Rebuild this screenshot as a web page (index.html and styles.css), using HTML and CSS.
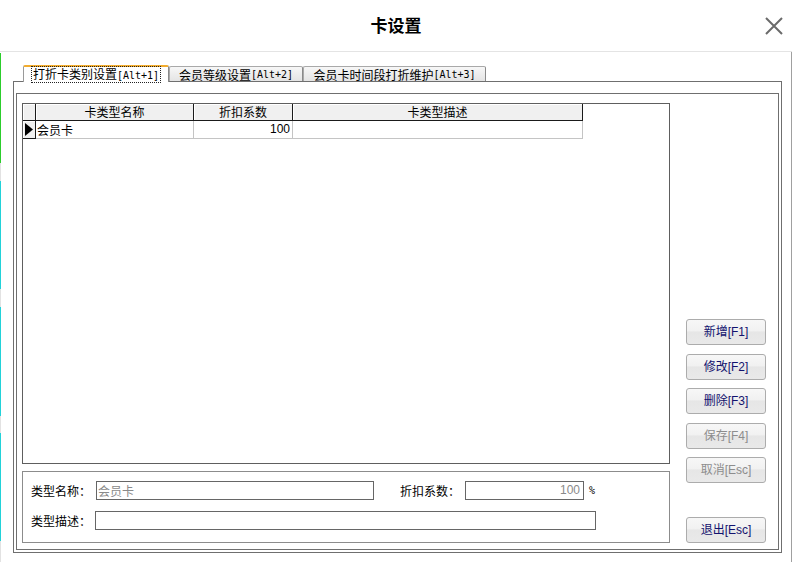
FILE: index.html
```html
<!DOCTYPE html>
<html lang="zh-CN">
<head>
<meta charset="utf-8">
<title>卡设置</title>
<link rel="stylesheet" href="styles.css">
</head>
<body>
<div class="app">
  <header class="header">
    <div></div>
    <h1 class="title">卡设置</h1>
    <div class="close-wrap">
      <svg class="close" width="18" height="18" viewBox="0 0 18 18">
        <path d="M1 1 L17 17 M17 1 L1 17" stroke="#6a6a6a" stroke-width="2" fill="none"/>
      </svg>
    </div>
  </header>
  <div class="main">
    <div class="edge">
      <div class="seg seg-white"></div>
      <div class="seg seg-green"></div>
      <div class="seg seg-gray s18"></div>
      <div class="seg seg-cyan s108"></div>
      <div class="seg seg-gray s18"></div>
      <div class="seg seg-cyan s109"></div>
      <div class="seg seg-gray s17"></div>
      <div class="seg seg-cyan s108"></div>
      <div class="seg seg-gray grow"></div>
    </div>
    <div class="body">
      <div class="tabs">
        <div class="tab tab-active w1"><span class="focus">打折卡类别设置<span class="mono">[Alt+1]</span></span></div>
        <div class="tab w2">会员等级设置<span class="mono">[Alt+2]</span></div>
        <div class="tab w3">会员卡时间段打折维护<span class="mono">[Alt+3]</span></div>
      </div>
      <div class="panel">
        <div class="inner">
          <div class="left-col">
            <div class="grid">
              <div class="grow-row head-row">
                <div class="cell rh head"></div>
                <div class="cell c1 head">卡类型名称</div>
                <div class="cell c2 head">折扣系数</div>
                <div class="cell c3 head">卡类型描述</div>
              </div>
              <div class="grow-row data-row">
                <div class="cell rh rh-data">
                  <svg width="8" height="13" viewBox="0 0 8 13"><path d="M0 0 L8 6.5 L0 13 Z" fill="#000"/></svg>
                </div>
                <div class="cell c1 data">会员卡</div>
                <div class="cell c2 data num">100</div>
                <div class="cell c3 data"></div>
              </div>
            </div>
            <div class="groupbox">
              <div class="form-row">
                <span class="label">类型名称：</span>
                <div class="input in-name">会员卡</div>
                <span class="label label2">折扣系数：</span>
                <div class="input in-rate">100</div>
                <span class="pct">%</span>
              </div>
              <div class="form-row row2">
                <span class="label">类型描述：</span>
                <div class="input in-desc"></div>
              </div>
            </div>
          </div>
          <div class="btn-col">
            <div class="btn-group">
              <button class="btn">新增[F1]</button>
              <button class="btn">修改[F2]</button>
              <button class="btn">删除[F3]</button>
              <button class="btn disabled">保存[F4]</button>
              <button class="btn disabled">取消[Esc]</button>
            </div>
            <button class="btn exit">退出[Esc]</button>
          </div>
        </div>
      </div>
    </div>
  </div>
</div>
</body>
</html>
```

FILE: styles.css
```css
* { box-sizing: border-box; }
html, body { margin: 0; padding: 0; }
body {
  width: 792px;
  height: 562px;
  overflow: hidden;
  background: #fff;
  font-family: "Liberation Sans", "Noto Sans CJK SC", sans-serif;
  font-size: 12px;
  color: #000;
}
.app {
  display: flex;
  flex-direction: column;
  height: 562px;
}
.header {
  height: 52px;
  flex: none;
  border-bottom: 1px solid #e4e4e4;
  display: grid;
  grid-template-columns: 1fr auto 1fr;
  align-items: center;
}
.title {
  margin: 0;
  font-size: 17px;
  font-weight: bold;
  font-family: "Noto Sans CJK SC", sans-serif;
  line-height: 20px;
  padding-bottom: 1px;
}
.close-wrap {
  display: flex;
  justify-content: flex-end;
  padding-right: 9px;
}
.close { display: block; }

.main {
  flex: 1;
  display: flex;
  min-height: 0;
}
.edge {
  width: 1px;
  flex: none;
  display: flex;
  flex-direction: column;
}
.seg { flex: none; }
.seg-white { height: 1px; background: #fff; }
.seg-green { height: 110px; background: #2ccd2c; }
.seg-gray { background: #e2e2e2; }
.seg-cyan { background: #22d2d9; }
.s18 { height: 18px; }
.s17 { height: 17px; }
.s108 { height: 108px; }
.s109 { height: 109px; }
.grow { flex: 1; }

.body {
  flex: 1;
  border-right: 1px solid #a0a0a0;
  padding: 13px 9px 9px 12px;
  display: flex;
  flex-direction: column;
}
.tabs {
  display: flex;
  align-items: flex-end;
  padding-left: 10px;
  height: 16px;
  flex: none;
}
.tab {
  height: 15px;
  display: flex;
  align-items: center;
  justify-content: center;
  font-family: "Noto Sans CJK SC", sans-serif;
  font-size: 12px;
  line-height: 13px;
  white-space: nowrap;
  background: linear-gradient(#f7f7f7, #e4e4e4);
  border: 1px solid #a9a9a9;
  border-bottom: none;
  border-right-color: #8a8a8a;
  border-radius: 2px 2px 0 0;
}
.tab-active {
  height: 17px;
  margin-bottom: -1px;
  position: relative;
  z-index: 1;
  background: #fff;
  border-top: 2px solid #f2ac2e;
  border-left-color: #9a9a9a;
  border-right-color: #8a8a8a;
  padding-bottom: 1px;
}
.focus {
  outline: 1px dotted #222;
  outline-offset: 0;
  padding: 0 1px;
}
.mono {
  font-family: "DejaVu Sans Mono", "Liberation Mono", monospace;
  font-size: 10px;
}
.w1 { width: 146px; }
.w2 { width: 134px; }
.w3 { width: 183px; }

.panel {
  flex: 1;
  border: 1px solid #6f6f6f;
  display: flex;
  padding: 11px 2px 2px 2px;
}
.inner {
  flex: 1;
  border: 1px solid #6f6f6f;
  display: flex;
  padding: 9px 12px 6px 5px;
  gap: 16px;
}
.left-col {
  width: 648px;
  flex: none;
  display: flex;
  flex-direction: column;
  gap: 7px;
}
.grid {
  flex: 1;
  border: 1px solid #5e5e5e;
  background: #fff;
}
.grow-row { display: flex; }
.cell {
  flex: none;
  font-family: "Noto Sans CJK SC", sans-serif;
  white-space: nowrap;
  overflow: hidden;
}
.rh { width: 13px; }
.c1 { width: 158px; }
.c2 { width: 99px; }
.c3 { width: 290px; }
.head-row { height: 17px; }
.head {
  background: #f0f0f0;
  border-right: 1px solid #1a1a1a;
  border-bottom: 1px solid #1a1a1a;
  box-shadow: inset 1px 1px 0 #fff;
  text-align: center;
  line-height: 16px;
}
.data-row { height: 18px; }
.data {
  border-right: 1px solid #c4c4c4;
  border-bottom: 1px solid #c4c4c4;
  line-height: 17px;
  padding-left: 1px;
}
.num {
  text-align: right;
  padding-right: 2px;
  font-family: "Liberation Sans", sans-serif;
}
.rh-data {
  background: #f0f0f0;
  border-right: 1px solid #1a1a1a;
  border-bottom: 1px solid #1a1a1a;
  box-shadow: inset 1px 1px 0 #fff;
  display: flex;
  align-items: center;
  padding-left: 2px;
}
.rh-data svg { display: block; }

.groupbox {
  height: 72px;
  flex: none;
  border: 1px solid #8c8c8c;
  padding: 9px 8px 12px 8px;
  display: flex;
  flex-direction: column;
  gap: 11px;
}
.form-row {
  display: flex;
  align-items: center;
  height: 19px;
}
.label {
  width: 65px;
  flex: none;
  font-family: "Noto Sans CJK SC", sans-serif;
  line-height: 19px;
}
.row2 .label { width: 64px; }
.label2 {
  margin-left: 26px;
  width: 65px;
}
.input {
  height: 19px;
  flex: none;
  border: 1px solid #666;
  background: #fff;
  color: #8a8a8a;
  line-height: 17px;
  padding: 0 1px;
  font-family: "Noto Sans CJK SC", sans-serif;
}
.in-name { width: 278px; }
.in-rate {
  width: 119px;
  text-align: right;
  padding-right: 3px;
  font-family: "Liberation Sans", sans-serif;
}
.in-desc { width: 501px; }
.pct {
  margin-left: 5px;
  font-size: 10px;
  font-family: "DejaVu Sans Mono", monospace;
}

.btn-col {
  width: 80px;
  flex: none;
  display: flex;
  flex-direction: column;
  justify-content: flex-end;
  gap: 34px;
}
.btn-group {
  display: flex;
  flex-direction: column;
  gap: 8.5px;
}
.btn {
  height: 26px;
  width: 80px;
  margin: 0;
  padding: 0;
  border: 1px solid #acacac;
  border-radius: 3px;
  background: linear-gradient(#f7f7f7 0%, #f1f1f1 45%, #e6e6e6 50%, #e9e9e9 100%);
  color: #12126e;
  font-family: "Liberation Sans", "Noto Sans CJK SC", sans-serif;
  font-size: 12px;
  line-height: 24px;
}
.btn.disabled { color: #8d8d8d; }
```
